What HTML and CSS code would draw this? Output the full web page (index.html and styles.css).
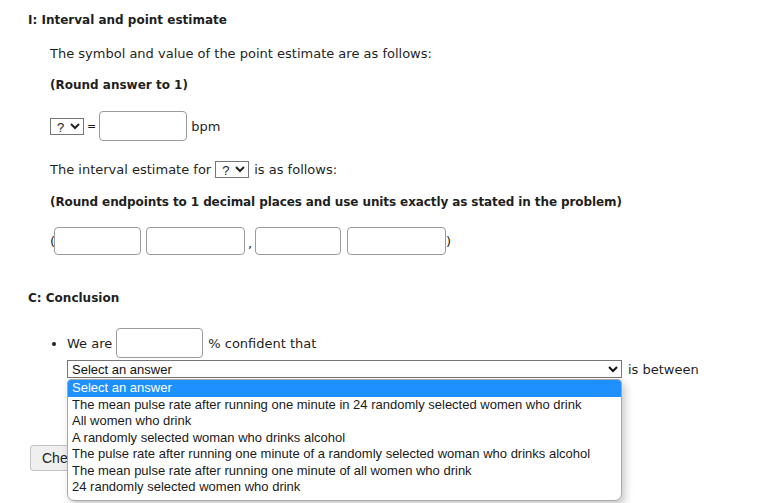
FILE: index.html
```html
<!DOCTYPE html>
<html>
<head>
<meta charset="utf-8">
<link rel="stylesheet" href="styles.css">
</head>
<body>
<div class="page">
  <div class="heading h-first">I: Interval and point estimate</div>
  <div class="block">
    <div class="line l-symbol">The symbol and value of the point estimate are as follows:</div>
    <div class="line bold l-round1">(Round answer to 1)</div>
    <div class="row r-point">
      <select class="sel-small"><option>?</option></select>
      <span class="eq">=</span>
      <input class="inp w88 h30" type="text">
      <span class="unit">bpm</span>
    </div>
    <div class="row r-interval">
      <span>The interval estimate for</span>
      <select class="sel-small"><option>?</option></select>
      <span>is as follows:</span>
    </div>
    <div class="line bold l-round2">(Round endpoints to 1 decimal places and use units exactly as stated in the problem)</div>
    <div class="row r-ends">
      <span class="paren">(</span>
      <input class="inp w87 h28" type="text">
      <input class="inp w99 h28 ml5" type="text">
      <span class="comma">,</span>
      <input class="inp w86 h28" type="text">
      <input class="inp w99 h28 ml6" type="text">
      <span class="paren">)</span>
    </div>
  </div>
  <div class="heading h-concl">C: Conclusion</div>
  <ul class="concl">
    <li>
      <div class="row r-we">
        <span>We are</span>
        <input class="inp w87 h30" type="text">
        <span>% confident that</span>
      </div>
      <div class="row r-sel">
        <div class="sel-wrap">
          <select class="sel-big"><option>Select an answer</option></select>
          <div class="popup">
            <div class="opt active">Select an answer</div>
            <div class="opt">The mean pulse rate after running one minute in 24 randomly selected women who drink</div>
            <div class="opt">All women who drink</div>
            <div class="opt">A randomly selected woman who drinks alcohol</div>
            <div class="opt">The pulse rate after running one minute of a randomly selected woman who drinks alcohol</div>
            <div class="opt">The mean pulse rate after running one minute of all women who drink</div>
            <div class="opt">24 randomly selected women who drink</div>
          </div>
        </div>
        <span class="between">is between</span>
      </div>
    </li>
  </ul>
  <button class="check" type="button">Check</button>
</div>
</body>
</html>
```

FILE: styles.css
```css
html, body {
  margin: 0;
  padding: 0;
  background: #ffffff;
}
body {
  font-family: "DejaVu Sans", Verdana, sans-serif;
  font-size: 13px;
  color: #1f1f1f;
}
.page {
  box-sizing: border-box;
  min-height: 503px;
  padding: 11px 0 0 28px;
}
.heading {
  font-weight: bold;
  font-size: 12px;
  line-height: 18px;
  height: 18px;
}
.h-concl {
  margin-top: 34px;
}
.block {
  padding-left: 22px;
}
.line {
  line-height: 18px;
  height: 18px;
  white-space: nowrap;
}
.bold {
  font-weight: bold;
  font-size: 12px;
}
.l-symbol { margin-top: 16px; }
.l-round1 { margin-top: 13px; }
.l-round2 { margin-top: 15px; letter-spacing: -0.1px; }
.row {
  display: flex;
  align-items: center;
  white-space: nowrap;
}
.r-point { margin-top: 17px; height: 30px; }
.r-interval { margin-top: 19px; height: 18px; }
.r-ends { margin-top: 16px; height: 28px; }
.sel-small {
  font-family: "Liberation Sans", Arial, sans-serif;
  font-size: 13px;
  width: 34px;
  height: 17px;
  margin: 0;
  padding: 0 0 0 2px;
  border: 1px solid #767676;
  border-radius: 0;
  background: #fff;
  color: #222;
}
.r-interval .sel-small {
  margin: 0 5px 0 4px;
}
.eq {
  margin: 0 3px 0 3px;
  font-size: 11px;
}
.unit { margin-left: 4px; }
.inp {
  box-sizing: border-box;
  margin: 0;
  padding: 0 4px;
  border: 1px solid #9a9a9a;
  border-radius: 4px;
  background: #fff;
  font: inherit;
}
.w86 { width: 86px; }
.w87 { width: 87px; }
.w88 { width: 88px; }
.w99 { width: 99px; }
.h28 { height: 28px; }
.h30 { height: 30px; }
.ml5 { margin-left: 5px; }
.ml6 { margin-left: 6px; }
.paren { width: 4px; }
.comma { width: 10px; text-align: center; align-self: flex-end; padding-bottom: 4px; }
.concl {
  margin: 21px 0 0 0;
  padding-left: 39px;
}
.concl li {
  list-style: disc;
}
.r-we { height: 30px; }
.r-we .inp { margin: 0 5px 0 4px; }
.r-sel { margin-top: 2px; height: 18px; }
.sel-wrap {
  position: relative;
  width: 555px;
  height: 18px;
}
.sel-big {
  width: 555px;
  height: 18px;
  margin: 0;
  padding: 0;
  border: 1px solid #767676;
  border-radius: 0;
  background: #fff;
  color: #111;
  font-family: "Liberation Sans", Arial, sans-serif;
  font-size: 13px;
}
.between { margin-left: 6px; }
.popup {
  position: absolute;
  left: 0;
  top: 19px;
  width: 555px;
  box-sizing: border-box;
  border: 1px solid #a8a8a8;
  border-radius: 4px 4px 7px 7px;
  background: #fff;
  padding: 0 0 4px 0;
  box-shadow: 3px 4px 8px rgba(0, 0, 0, 0.22);
  overflow: hidden;
  z-index: 5;
  font-family: "Liberation Sans", Arial, sans-serif;
  font-size: 13px;
  color: #1a1a1a;
}
.opt {
  height: 16.5px;
  line-height: 16px;
  padding-left: 4px;
  white-space: nowrap;
}
.opt.active {
  background: #1e90ff;
  color: #fff;
}
.check {
  margin: 67px 0 0 2px;
  height: 26px;
  padding: 0 11px;
  border: 1px solid #c4c4c4;
  border-radius: 3px;
  background: #efefef;
  font-family: "Liberation Sans", Arial, sans-serif;
  font-size: 14px;
  color: #222;
}
```
